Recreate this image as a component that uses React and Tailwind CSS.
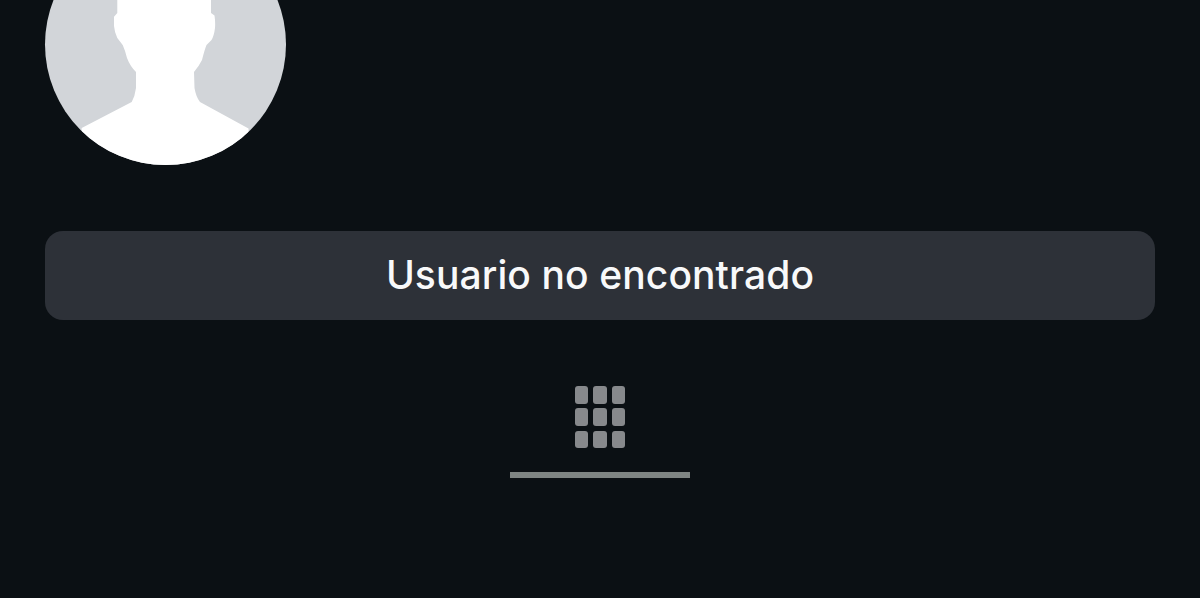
export default function App() {
  const cells = [0, 1, 2, 3, 4, 5, 6, 7, 8];
  return (
    <div className="h-[598px] w-full overflow-hidden bg-[#0b1014] px-[45px] flex flex-col" style={{ fontFamily: "Inter, 'Liberation Sans', sans-serif" }}>
      <div className="mt-[-76px] h-[241px] w-[241px] shrink-0 overflow-hidden rounded-full bg-[#d2d5d9]">
        <svg viewBox="45 -76 241 241" className="h-full w-full block">
          <path
            fill="#ffffff"
            d="M117.3 -30 L211 -30 L211 13 L214.5 15.5 Q215.5 22 215 28 Q214 36 211.5 40 L206.5 45 Q204.5 50 202 60 Q199 66 194 72 L194.5 88 Q196 97 200 102 L248.5 128.5 L250 170 L80 170 L81.7 128 L131.7 102 Q135 96 136 88 L136 72 Q130 66 127 58 Q125 50 122.7 45 L117.3 38 Q114.5 32 114 26 L114 16.7 L117.3 13 Z"
          />
        </svg>
      </div>
      <div className="mt-[66px] flex h-[89px] shrink-0 items-center justify-center rounded-[18px] bg-[#2d3138] text-[39px] font-medium tracking-[0.1px] text-[#f8f9fa]">
        Usuario no encontrado
      </div>
      <div className="mt-[66px] grid w-fit grid-cols-[repeat(3,13.33px)] grid-rows-[repeat(3,17.5px)] gap-x-[5.33px] gap-y-[4.9px] self-center">
        {cells.map((c) => (
          <div key={c} className="rounded-[3px] bg-[#87898c]" />
        ))}
      </div>
      <div className="mt-[24px] h-[6px] w-[180px] shrink-0 self-center bg-[#7f8583]" />
    </div>
  );
}
